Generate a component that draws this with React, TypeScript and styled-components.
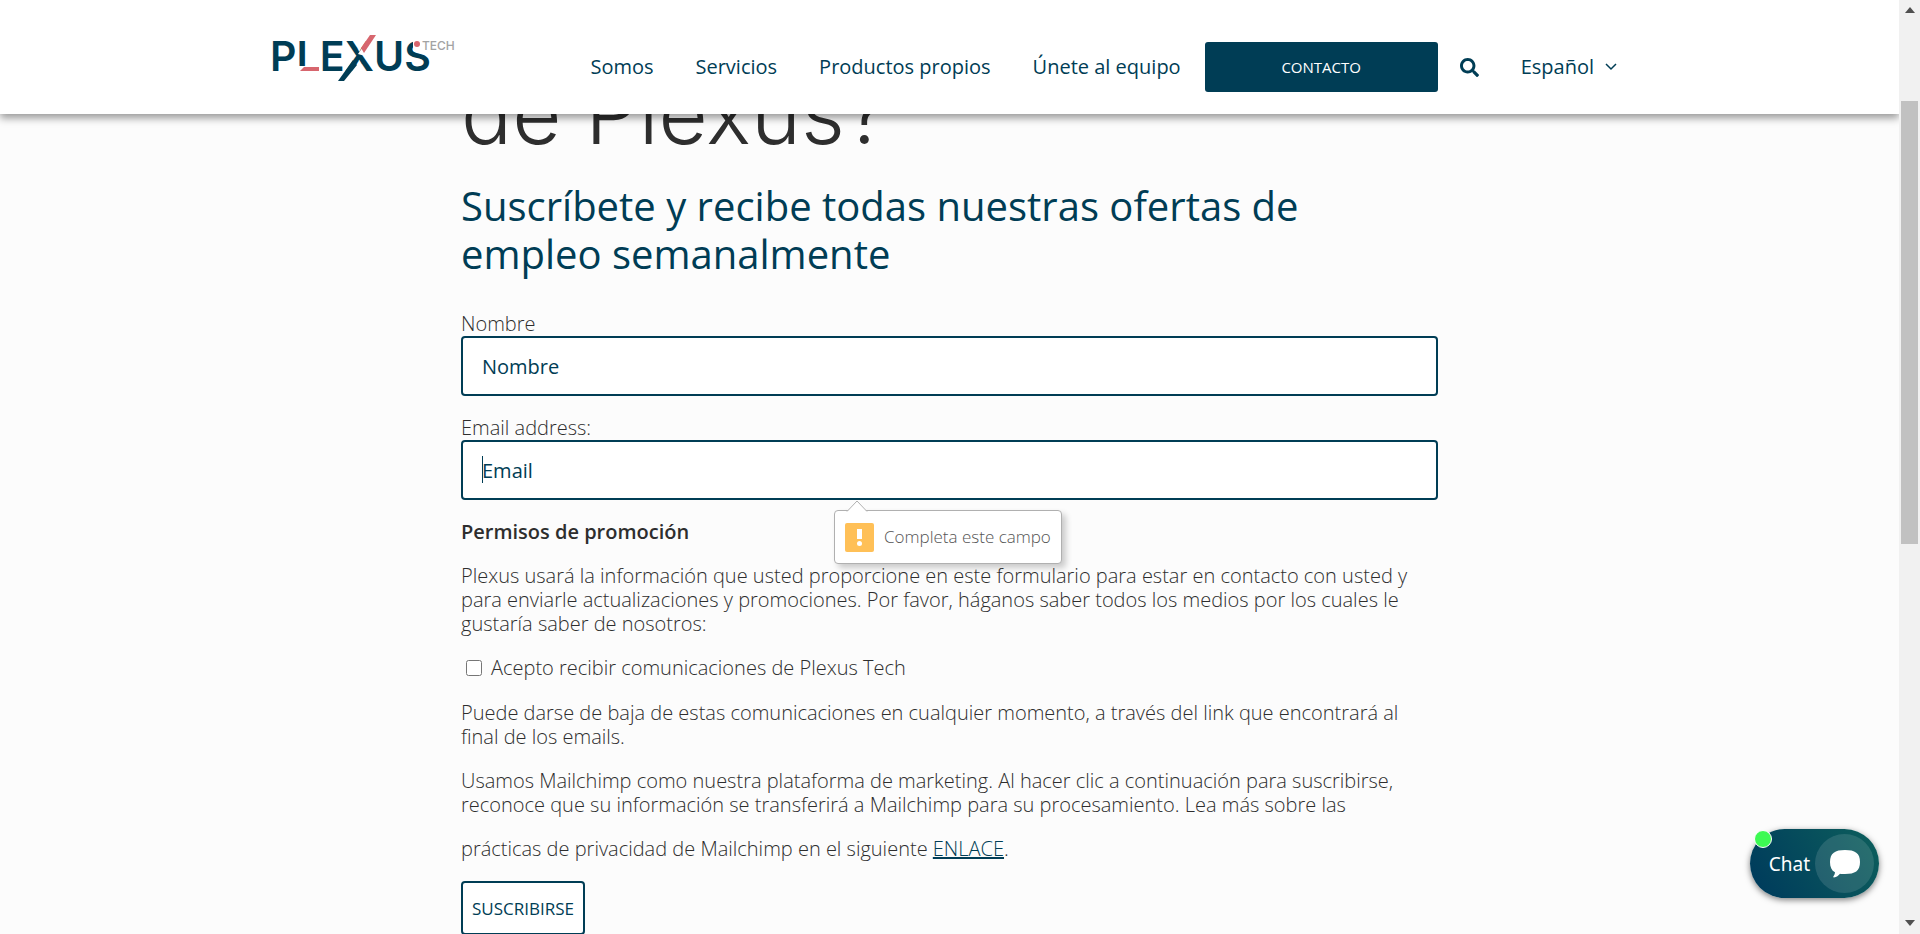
import React from 'react';
import styled, { createGlobalStyle } from 'styled-components';
import { FaSearch, FaComment } from 'react-icons/fa';

const navy = '#003d55';
const sans = '"Open Sans", "Noto Sans", sans-serif';

const GlobalStyle = createGlobalStyle`
  *, *::before, *::after { box-sizing: border-box; }
  body {
    margin: 0;
    background: #fcfcfc;
    color: #2e2e2e;
    font: 300 20px/24px ${sans};
  }
  button, input { font-family: inherit; }
`;

const Screen = styled.div`
  display: grid;
  grid-template-columns: minmax(0, 1fr) 21px;
  height: 100vh;
  overflow: hidden;
`;

const Page = styled.div`
  position: relative;
  overflow: hidden;
`;

const Header = styled.header`
  position: absolute;
  top: 0;
  left: 0;
  right: 0;
  z-index: 2;
  height: 114px;
  background: #fff;
  box-shadow: 0 4px 8px rgba(0, 0, 0, 0.4);
`;

const HeaderInner = styled.div`
  display: flex;
  justify-content: space-between;
  max-width: 1363px;
  height: 100%;
  margin: 0 auto;
`;

const LogoLink = styled.a`
  display: block;
  padding-top: 32px;
`;

const Nav = styled.nav`
  display: flex;
  align-items: center;
  gap: 42px;
  height: 50px;
  margin-top: 42px;
  padding-right: 14px;
`;

const NavLink = styled.a`
  color: ${navy};
  font-weight: 400;
  white-space: nowrap;
  text-decoration: none;
`;

const Actions = styled.div`
  display: flex;
  align-items: center;
  gap: 22px;
  margin-left: -18px;
`;

const ContactButton = styled.button`
  width: 233px;
  height: 50px;
  border: 0;
  border-radius: 3px;
  background: ${navy};
  color: #fff;
  font-size: 15px;
  font-weight: 400;
`;

const SearchButton = styled.button`
  display: flex;
  padding: 0;
  border: 0;
  background: none;
  color: ${navy};
`;

const LanguageButton = styled.button`
  display: flex;
  align-items: center;
  gap: 11px;
  padding: 0;
  border: 0;
  background: none;
  color: ${navy};
  font-size: 20px;
  line-height: 24px;
`;

const Main = styled.main`
  max-width: 977px;
  margin: 0 auto;
  padding-top: 84px;
`;

const Title = styled.h1`
  margin: 0 0 38px;
  font: 300 85px/60px Inter, sans-serif;
`;

const Subtitle = styled.h2`
  margin: 0;
  color: ${navy};
  font-size: 40px;
  font-weight: 400;
  line-height: 48px;
`;

const Form = styled.form`
  padding-top: 34px;
`;

const Field = styled.div`
  position: relative;
  padding-bottom: 20px;
`;

const Label = styled.label`
  display: block;
`;

const TextInput = styled.input`
  display: block;
  width: 100%;
  height: 60px;
  padding: 0 19px;
  border: 2px solid ${navy};
  border-radius: 4px;
  outline: 0;
  background: #fff;
  color: ${navy};
  font-size: 20px;
  &::placeholder { color: ${navy}; opacity: 1; }
`;

const Caret = styled.span`
  position: absolute;
  left: 21px;
  top: 40px;
  width: 1px;
  height: 27px;
  background: ${navy};
`;

const Tooltip = styled.div`
  position: absolute;
  z-index: 1;
  left: 373px;
  top: 94px;
  display: flex;
  align-items: center;
  gap: 10px;
  height: 54px;
  padding: 0 10px;
  border: 1px solid #b0b0b0;
  border-radius: 4px;
  background: #fff;
  box-shadow: 4px 4px 6px rgba(0, 0, 0, 0.2);
  color: #555;
  font-size: 17px;
  white-space: nowrap;
`;

const TooltipArrow = styled.svg`
  position: absolute;
  left: 11px;
  top: -11px;
`;

const Legend = styled.h3`
  margin: 0 0 20px;
  font-size: 20px;
  font-weight: 600;
  line-height: 24px;
`;

const Paragraph = styled.p`
  margin: 0 0 20px;
`;

const CheckRow = styled.label`
  display: flex;
  align-items: center;
  gap: 9px;
  margin-bottom: 21px;
  padding-left: 5px;
`;

const Checkbox = styled.input`
  width: 16px;
  height: 16px;
  margin: 0;
`;

const PrivacyLink = styled.a`
  color: ${navy};
  text-decoration: underline;
  text-decoration-thickness: 2px;
`;

const SubmitButton = styled.button`
  width: 124px;
  height: 54px;
  padding: 0;
  border: 2px solid ${navy};
  border-radius: 4px;
  background: #fff;
  color: ${navy};
  font-size: 17px;
`;

const ChatButton = styled.button`
  position: absolute;
  right: 20px;
  bottom: 36px;
  display: flex;
  align-items: center;
  justify-content: flex-end;
  gap: 5px;
  width: 129px;
  height: 69px;
  padding: 0 5px 0 0;
  border: 0;
  border-radius: 35px;
  background: linear-gradient(60deg, #003d5c 10%, #0d5f5c);
  box-shadow: 0 2px 6px rgba(0, 0, 0, 0.5);
  color: #fff;
  font: 400 19px/28px "Noto Sans", sans-serif;
`;

const ChatBubble = styled.span`
  display: flex;
  align-items: center;
  justify-content: center;
  width: 59px;
  height: 59px;
  border-radius: 50%;
  background: rgba(255, 255, 255, 0.12);
`;

const OnlineDot = styled.span`
  position: absolute;
  left: 4px;
  top: 1px;
  width: 18px;
  height: 18px;
  border: 1px solid #fff;
  border-radius: 50%;
  background: #3dfa53;
`;

const Scrollbar = styled.div`
  display: flex;
  flex-direction: column;
  align-items: center;
  justify-content: space-between;
  padding: 7px 0 8px;
  background: #f1f1f1;
`;

const ScrollTrack = styled.div`
  flex: 1;
  width: 17px;
  padding-top: 88px;
`;

const ScrollThumb = styled.div`
  height: 443px;
  background: #c1c1c1;
`;

function Logo() {
  return (
    <svg width="198" height="54" viewBox="268 32 198 54" role="img" aria-label="Plexus Tech">
      <text x="270" y="71" fontFamily="Inter, sans-serif" fontWeight="600" fontSize="41" fill={navy}>
        PLEXUS
      </text>
      <path d="M297 66h24v6h-24z" fill="#fff" />
      <path d="M304 67h15v4h-19z" fill="#d7666e" />
      <path d="M358 54l9-13h9l-11 15z" fill="#fff" />
      <path d="M361 48l9-13h6l-12 18z" fill="#d7666e" />
      <path d="M353 60l4 5-13 16h-6z" fill={navy} />
      <path d="M413 36h17v15h-17z" fill="#fff" />
      <circle cx="417" cy="44" r="3" fill="#d7666e" />
      <text x="422" y="50" fontFamily="Inter, sans-serif" fontWeight="500" fontSize="12" fill="#a3a3a3">
        TECH
      </text>
    </svg>
  );
}

function Chevron() {
  return (
    <svg width="12" height="8" viewBox="0 0 12 8" aria-hidden="true">
      <path d="M1 1l5 5 5-5" fill="none" stroke={navy} strokeWidth="1.5" />
    </svg>
  );
}

function Arrow({ up = false }: { up?: boolean }) {
  return (
    <svg width="10" height="6" viewBox="0 0 10 6" aria-hidden="true">
      <path d={up ? 'M0 6l5-6 5 6z' : 'M0 0l5 6 5-6z'} fill="#505050" />
    </svg>
  );
}

function Warning() {
  return (
    <svg width="29" height="29" viewBox="0 0 29 29" aria-hidden="true">
      <rect width="29" height="29" rx="2" fill="#ffc057" />
      <path d="M12 6h5v10h-5z" fill="#fff" />
      <circle cx="14.5" cy="20.5" r="2.5" fill="#fff" />
    </svg>
  );
}

function SpeechBubble() {
  return (
    <svg width="30" height="28" viewBox="0 0 30 28" aria-hidden="true">
      <path
        d="M15 0C25 0 30 3 30 12s-5 12-15 12c-2 0-4 0-5-.3C8.500 25.500 6.500 27 4 27.500c-.8.100-1-.6-.5-1.200 1-1.300 1.500-2.600 1.500-4C1.500 20.500 0 17 0 12 0 3 5 0 15 0z"
        fill="#fff"
      />
    </svg>
  );
}

export default function App() {
  return (
    <Screen>
      <GlobalStyle />
      <Page>
        <Header>
          <HeaderInner>
            <LogoLink href="#"><Logo /></LogoLink>
            <Nav>
              <NavLink href="#">Somos</NavLink>
              <NavLink href="#">Servicios</NavLink>
              <NavLink href="#">Productos propios</NavLink>
              <NavLink href="#">Únete al equipo</NavLink>
              <Actions>
                <ContactButton>CONTACTO</ContactButton>
                <SearchButton aria-label="Buscar"><FaSearch size={19} /></SearchButton>
              </Actions>
              <LanguageButton>Español <Chevron /></LanguageButton>
            </Nav>
          </HeaderInner>
        </Header>

        <Main>
          <Title>de Plexus?</Title>
          <Subtitle>
            Suscríbete y recibe todas nuestras ofertas de<br />empleo semanalmente
          </Subtitle>
          <Form onSubmit={(e) => e.preventDefault()}>
            <Field>
              <Label htmlFor="name">Nombre</Label>
              <TextInput id="name" placeholder="Nombre" />
            </Field>
            <Field>
              <Label htmlFor="email">Email address:</Label>
              <TextInput id="email" type="email" placeholder="Email" required />
              <Caret />
              <Tooltip role="alert">
                <TooltipArrow width="22" height="12" viewBox="0 0 22 12" aria-hidden="true">
                  <path d="M1 11.500L11 1l10 10.500" fill="#fff" stroke="#b0b0b0" />
                </TooltipArrow>
                <Warning />
                Completa este campo
              </Tooltip>
            </Field>
            <Legend>Permisos de promoción</Legend>
            <Paragraph>
              Plexus usará la información que usted proporcione en este formulario para estar en contacto con usted y<br />
              para enviarle actualizaciones y promociones. Por favor, háganos saber todos los medios por los cuales le<br />
              gustaría saber de nosotros:
            </Paragraph>
            <CheckRow>
              <Checkbox type="checkbox" />
              Acepto recibir comunicaciones de Plexus Tech
            </CheckRow>
            <Paragraph>
              Puede darse de baja de estas comunicaciones en cualquier momento, a través del link que encontrará al<br />
              final de los emails.
            </Paragraph>
            <Paragraph>
              Usamos Mailchimp como nuestra plataforma de marketing. Al hacer clic a continuación para suscribirse,<br />
              reconoce que su información se transferirá a Mailchimp para su procesamiento. Lea más sobre las
            </Paragraph>
            <Paragraph>
              prácticas de privacidad de Mailchimp en el siguiente <PrivacyLink href="#">ENLACE</PrivacyLink>.
            </Paragraph>
            <SubmitButton type="submit">SUSCRIBIRSE</SubmitButton>
          </Form>
        </Main>

        <ChatButton>
          <OnlineDot />
          Chat
          <ChatBubble><SpeechBubble /></ChatBubble>
        </ChatButton>
      </Page>
      <Scrollbar aria-hidden="true">
        <Arrow up />
        <ScrollTrack><ScrollThumb /></ScrollTrack>
        <Arrow />
      </Scrollbar>
    </Screen>
  );
}
